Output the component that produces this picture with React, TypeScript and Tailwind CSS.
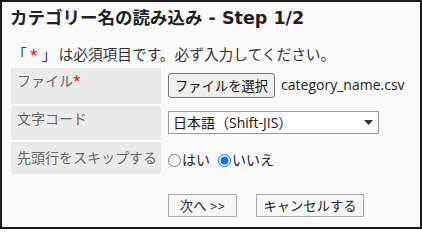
import React from "react";

const body = { fontFamily: '"Open Sans", "Noto Sans CJK JP", sans-serif' };

export default function App() {
  return (
    <div
      className="w-[422px] h-[229px] border-2 border-[#1a1a1a] bg-[#fafafa] text-[#333] overflow-hidden"
      style={body}
    >
      <div
        className="pl-[8px] pt-[5px] text-[17.5px] leading-[22px] font-bold text-[#222]"
        style={{ fontFamily: '"DejaVu Sans", "Noto Sans CJK JP", sans-serif' }}
      >
        カテゴリー名の読み込み - Step 1/2
      </div>
      <div className="pl-[10px] mt-[15px] text-[14.7px] leading-[20px]">
        「<span className="inline-block ml-[3px] mr-[4px] text-[#e60000]">*</span>」<span className="inline-block w-[2px]"></span>は必須項目です。必ず入力してください。
      </div>
      <div className="ml-[9px] mt-[4px] grid grid-cols-[150px_1fr] gap-x-[2px] gap-y-[2px] text-[14px] leading-[20px]">
        <div className="h-[36px] bg-[#eaeaea] pl-[6px] pt-[3px] text-[#666]">
          ファイル<span className="text-[#e60000]">*</span>
        </div>
        <div className="h-[36px] pl-[5px] pt-[5px] flex items-start gap-[6px]">
          <button className="h-[25px] px-[6px] border border-[#767676] rounded-[3px] bg-[#efefef] text-[13.3px] leading-[20px] text-[#111]">
            ファイルを選択
          </button>
          <span className="pt-[2px] text-[#222]">category_name.csv</span>
        </div>

        <div className="h-[34px] bg-[#eaeaea] pl-[6px] pt-[3px] text-[#666]">文字コード</div>
        <div className="h-[34px] pl-[5px] pt-[5px]">
          <div className="w-[211px] h-[23px] border border-[#999] bg-white flex items-center justify-between pl-[4px] pr-[5px] text-[#111]">
            <span>日本語（Shift-JIS）</span>
            <svg width="9" height="5" viewBox="0 0 9 5">
              <path d="M0 0H9L4.5 5Z" fill="#333" />
            </svg>
          </div>
        </div>

        <div className="h-[32px] bg-[#eaeaea] pl-[6px] pt-[6px] text-[#666]">先頭行をスキップする</div>
        <div className="h-[32px] pl-[5px] pt-[4px] flex items-center text-[#222]">
          <input type="radio" name="skip" className="m-0 mr-[1px] w-[13px] h-[13px]" />
          <span>はい</span>
          <input type="radio" name="skip" defaultChecked className="m-0 ml-[8px] mr-[1px] w-[13px] h-[13px]" />
          <span>いいえ</span>
        </div>
      </div>
      <div className="ml-[166px] mt-[20px] flex gap-[19px]">
        <button className="w-[69px] h-[23px] border border-[#aaa] bg-[#f7f7f7] text-[13.3px] leading-[20px] text-[#222]">
          次へ &gt;&gt;
        </button>
        <button className="w-[108px] h-[23px] border border-[#aaa] bg-[#f7f7f7] text-[13.3px] leading-[20px] text-[#222]">
          キャンセルする
        </button>
      </div>
    </div>
  );
}
